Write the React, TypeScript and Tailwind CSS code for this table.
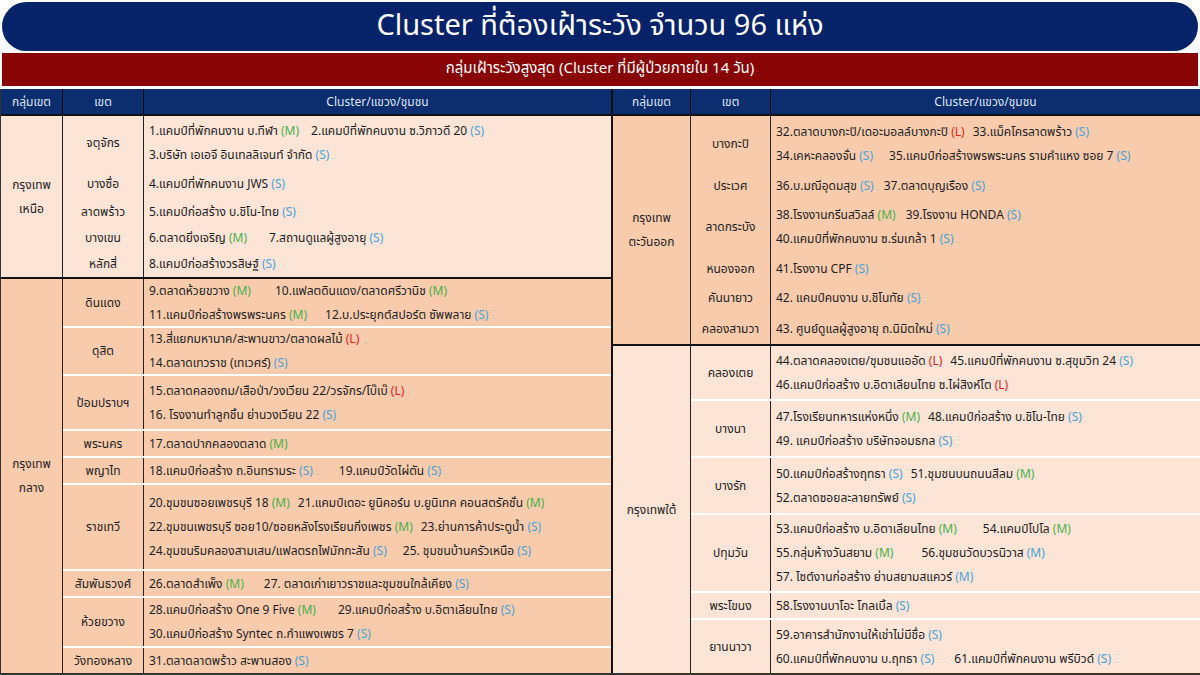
import React from 'react';

type Tag = 'M' | 'S' | 'L' | 'Mb';
type Item = { t: string; tag: Tag };
type Line = { items: Item[]; gap?: string };
type District = { name: string; h: string; lines: Line[] };
type Group = { name: string[]; bg: string; sep: boolean; districts: District[] };

const tagColor: Record<Tag, string> = {
  M: 'text-[#49b04a]',
  Mb: 'text-[#4aa3d8]',
  S: 'text-[#4aa3d8]',
  L: 'text-[#e2231a]',
};

const left: Group[] = [
  {
    name: ['กรุงเทพ', 'เหนือ'],
    bg: 'bg-[#fce4d6]',
    sep: false,
    districts: [
      {
        name: 'จตุจักร',
        h: 'h-[53px]',
        lines: [
          { items: [{ t: '1.แคมป์ที่พักคนงาน บ.ทีฬา', tag: 'M' }, { t: '2.แคมป์ที่พักคนงาน ซ.วิภาวดี 20', tag: 'S' }] },
          { items: [{ t: '3.บริษัท เอเอจี อินเทลลิเจนท์ จำกัด', tag: 'S' }] },
        ],
      },
      { name: 'บางซื่อ', h: 'h-[30px]', lines: [{ items: [{ t: '4.แคมป์ที่พักคนงาน JWS', tag: 'S' }] }] },
      { name: 'ลาดพร้าว', h: 'h-[26px]', lines: [{ items: [{ t: '5.แคมป์ก่อสร้าง บ.ชิโน-ไทย', tag: 'S' }] }] },
      {
        name: 'บางเขน',
        h: 'h-[26px]',
        lines: [{ gap: 'gap-x-[22px]', items: [{ t: '6.ตลาดยิ่งเจริญ', tag: 'M' }, { t: '7.สถานดูแลผู้สูงอายุ', tag: 'S' }] }],
      },
      { name: 'หลักสี่', h: 'h-[26px]', lines: [{ items: [{ t: '8.แคมป์ก่อสร้างวรสิษฐ์', tag: 'S' }] }] },
    ],
  },
  {
    name: ['กรุงเทพ', 'กลาง'],
    bg: 'bg-[#f8cbad]',
    sep: true,
    districts: [
      {
        name: 'ดินแดง',
        h: 'h-[47px]',
        lines: [
          { gap: 'gap-x-[24px]', items: [{ t: '9.ตลาดห้วยขวาง', tag: 'M' }, { t: '10.แฟลตดินแดง/ตลาดศรีวานิช', tag: 'M' }] },
          { gap: 'gap-x-[18px]', items: [{ t: '11.แคมป์ก่อสร้างพรพระนคร', tag: 'M' }, { t: '12.บ.ประยุกต์สปอร์ต ซัพพลาย', tag: 'S' }] },
        ],
      },
      {
        name: 'ดุสิต',
        h: 'h-[48px]',
        lines: [
          { items: [{ t: '13.สี่แยกมหานาค/สะพานขาว/ตลาดผลไม้', tag: 'L' }] },
          { items: [{ t: '14.ตลาดเทวราช (เทเวศร์)', tag: 'S' }] },
        ],
      },
      {
        name: 'ป้อมปราบฯ',
        h: 'h-[55px]',
        lines: [
          { items: [{ t: '15.ตลาดคลองถม/เสือป่า/วงเวียน 22/วรจักร/โบ๊เบ๊', tag: 'L' }] },
          { items: [{ t: '16. โรงงานทำลูกชิ้น ย่านวงเวียน 22 ', tag: 'S' }] },
        ],
      },
      { name: 'พระนคร', h: 'h-[27px]', lines: [{ items: [{ t: '17.ตลาดปากคลองตลาด', tag: 'M' }] }] },
      {
        name: 'พญาไท',
        h: 'h-[27px]',
        lines: [{ gap: 'gap-x-[26px]', items: [{ t: '18.แคมป์ก่อสร้าง ถ.อินทรามระ', tag: 'S' }, { t: '19.แคมป์วัดไผ่ตัน', tag: 'S' }] }],
      },
      {
        name: 'ราชเทวี',
        h: 'h-[86px]',
        lines: [
          { gap: 'gap-x-[8px]', items: [{ t: '20.ชุมชนซอยเพชรบุรี 18', tag: 'M' }, { t: '21.แคมป์เดอะ ยูนิคอร์น บ.ยูนิเทค คอนสตรัคชั่น', tag: 'M' }] },
          { gap: 'gap-x-[8px]', items: [{ t: '22.ชุมชนเพชรบุรี ซอย10/ซอยหลังโรงเรียนกิ่งเพชร', tag: 'M' }, { t: '23.ย่านการค้าประตูน้ำ', tag: 'S' }] },
          { gap: 'gap-x-[16px]', items: [{ t: '24.ชุมชนริมคลองสามเสน/แฟลตรถไฟมักกะสัน', tag: 'S' }, { t: '25. ชุมชนบ้านครัวเหนือ', tag: 'S' }] },
        ],
      },
      {
        name: 'สัมพันธวงศ์',
        h: 'h-[27px]',
        lines: [{ gap: 'gap-x-[20px]', items: [{ t: '26.ตลาดสำเพ็ง', tag: 'M' }, { t: '27. ตลาดเก่าเยาวราชและชุมชนใกล้เคียง', tag: 'S' }] }],
      },
      {
        name: 'ห้วยขวาง',
        h: 'h-[50px]',
        lines: [
          { gap: 'gap-x-[22px]', items: [{ t: '28.แคมป์ก่อสร้าง One 9 Five', tag: 'M' }, { t: '29.แคมป์ก่อสร้าง บ.อิตาเลียนไทย', tag: 'S' }] },
          { items: [{ t: '30.แคมป์ก่อสร้าง Syntec  ถ.กำแพงเพชร 7', tag: 'S' }] },
        ],
      },
      { name: 'วังทองหลาง', h: 'h-[27px]', lines: [{ items: [{ t: '31.ตลาดลาดพร้าว สะพานสอง ', tag: 'S' }] }] },
    ],
  },
];

const right: Group[] = [
  {
    name: ['กรุงเทพ', 'ตะวันออก'],
    bg: 'bg-[#f8cbad]',
    sep: false,
    districts: [
      {
        name: 'บางกะปิ',
        h: 'h-[55px]',
        lines: [
          { gap: 'gap-x-[8px]', items: [{ t: '32.ตลาดบางกะปิ/เดอะมอลล์บางกะปิ', tag: 'L' }, { t: '33.แม็คโครลาดพร้าว', tag: 'S' }] },
          { gap: 'gap-x-[16px]', items: [{ t: '34.เคหะคลองจั่น', tag: 'S' }, { t: '35.แคมป์ก่อสร้างพรพระนคร รามคำแหง ซอย 7', tag: 'S' }] },
        ],
      },
      {
        name: 'ประเวศ',
        h: 'h-[29px]',
        lines: [{ gap: 'gap-x-[10px]', items: [{ t: '36.บ.มณีอุดมสุข', tag: 'S' }, { t: '37.ตลาดบุญเรือง', tag: 'S' }] }],
      },
      {
        name: 'ลาดกระบัง',
        h: 'h-[54px]',
        lines: [
          { gap: 'gap-x-[10px]', items: [{ t: '38.โรงงานกรีนสวิลล์', tag: 'M' }, { t: '39.โรงงาน HONDA', tag: 'S' }] },
          { items: [{ t: '40.แคมป์ที่พักคนงาน ซ.ร่มเกล้า 1', tag: 'S' }] },
        ],
      },
      { name: 'หนองจอก', h: 'h-[29px]', lines: [{ items: [{ t: '41.โรงงาน CPF', tag: 'S' }] }] },
      { name: 'คันนายาว', h: 'h-[30px]', lines: [{ items: [{ t: '42. แคมป์คนงาน บ.ชิโนทัย ', tag: 'S' }] }] },
      { name: 'คลองสามวา', h: 'h-[31px]', lines: [{ items: [{ t: '43. ศูนย์ดูแลผู้สูงอายุ ถ.นิมิตใหม่', tag: 'S' }] }] },
    ],
  },
  {
    name: ['กรุงเทพใต้'],
    bg: 'bg-[#fce4d6]',
    sep: true,
    districts: [
      {
        name: 'คลองเตย',
        h: 'h-[53px]',
        lines: [
          { gap: 'gap-x-[8px]', items: [{ t: '44.ตลาดคลองเตย/ชุมชนแออัด', tag: 'L' }, { t: '45.แคมป์ที่พักคนงาน ซ.สุขุมวิท 24', tag: 'S' }] },
          { items: [{ t: '46.แคมป์ก่อสร้าง บ.อิตาเลียนไทย ซ.ไผ่สิงห์โต', tag: 'L' }] },
        ],
      },
      {
        name: 'บางนา',
        h: 'h-[57px]',
        lines: [
          { gap: 'gap-x-[8px]', items: [{ t: '47.โรงเรียนทหารแห่งหนึ่ง', tag: 'M' }, { t: '48.แคมป์ก่อสร้าง บ.ชิโน-ไทย', tag: 'S' }] },
          { items: [{ t: '49. แคมป์ก่อสร้าง บริษัทจอมธกล', tag: 'S' }] },
        ],
      },
      {
        name: 'บางรัก',
        h: 'h-[57px]',
        lines: [
          { gap: 'gap-x-[8px]', items: [{ t: '50.แคมป์ก่อสร้างฤทธา', tag: 'S' }, { t: '51.ชุมชนบนถนนสีลม', tag: 'M' }] },
          { items: [{ t: '52.ตลาดซอยละลายทรัพย์ ', tag: 'S' }] },
        ],
      },
      {
        name: 'ปทุมวัน',
        h: 'h-[78px]',
        lines: [
          { gap: 'gap-x-[26px]', items: [{ t: '53.แคมป์ก่อสร้าง บ.อิตาเลียนไทย', tag: 'M' }, { t: '54.แคมป์โปโล', tag: 'M' }] },
          { gap: 'gap-x-[28px]', items: [{ t: '55.กลุ่มห้างวันสยาม', tag: 'M' }, { t: '56.ชุมชนวัดบวรนิวาส', tag: 'Mb' }] },
          { items: [{ t: '57. ไซต์งานก่อสร้าง ย่านสยามสแควร์', tag: 'Mb' }] },
        ],
      },
      { name: 'พระโขนง', h: 'h-[27px]', lines: [{ items: [{ t: '58.โรงงานบาโอะ โกลเบิ้ล', tag: 'S' }] }] },
      {
        name: 'ยานนาวา',
        h: 'h-[55px]',
        lines: [
          { items: [{ t: '59.อาคารสำนักงานให้เช่าไม่มีชื่อ', tag: 'S' }] },
          { gap: 'gap-x-[20px]', items: [{ t: '60.แคมป์ที่พักคนงาน บ.ฤทธา', tag: 'S' }, { t: '61.แคมป์ที่พักคนงาน พรีบิวด์', tag: 'S' }] },
        ],
      },
    ],
  },
];

const ClusterLine = ({ line }: { line: Line }) => (
  <div className={`flex items-center whitespace-nowrap ${line.gap || 'gap-x-[12px]'}`}>
    {line.items.map((it, i) => (
      <span key={i}>
        {it.t} <span className={tagColor[it.tag]}>({it.tag === 'Mb' ? 'M' : it.tag})</span>
      </span>
    ))}
  </div>
);

const Table = ({ groups, gw, dw }: { groups: Group[]; gw: string; dw: string }) => (
  <div className="flex flex-col">
    <div className="flex h-[27px] bg-[#0c2d6e] text-[12px] text-[#dfe6f5] border-b-2 border-[#111]">
      <div className={`${gw} flex items-center justify-center border-r border-[#0a0a0a]`}>กลุ่มเขต</div>
      <div className={`${dw} flex items-center justify-center border-r border-[#0a0a0a]`}>เขต</div>
      <div className="flex-1 flex items-center justify-center">Cluster/แขวง/ชุมชน</div>
    </div>
    {groups.map((g, gi) => (
      <div key={gi} className={`flex ${g.bg} ${gi > 0 ? 'border-t-2 border-[#111]' : ''}`}>
        <div className={`${gw} flex flex-col items-center justify-center border-r border-[#222] leading-[24px]`}>
          {g.name.map((n) => (
            <div key={n}>{n}</div>
          ))}
        </div>
        <div className="flex-1 flex flex-col">
          {g.districts.map((d, di) => (
            <div
              key={d.name}
              className={`flex ${d.h} ${g.sep && di > 0 ? 'border-t-2 border-white' : ''}`}
            >
              <div className={`${dw} shrink-0 flex items-center justify-center border-r border-[#222]`}>{d.name}</div>
              <div className="flex-1 flex flex-col justify-center pl-[5px] leading-[24px]">
                {d.lines.map((l, li) => (
                  <ClusterLine key={li} line={l} />
                ))}
              </div>
            </div>
          ))}
        </div>
      </div>
    ))}
  </div>
);

export default function App() {
  return (
    <div
      className="w-[1200px] h-[675px] bg-white flex flex-col overflow-hidden text-[12px] text-[#1e1e1e]"
      style={{ fontFamily: "'Noto Sans Thai', Tahoma, 'DejaVu Sans', sans-serif" }}
    >
      <div className="mx-[2px] mt-[2px] h-[50px] rounded-full bg-[#062369] flex items-center justify-center text-white text-[29px]">
        Cluster ที่ต้องเฝ้าระวัง จำนวน 96 แห่ง
      </div>
      <div className="mx-[2px] mt-[2px] h-[33px] bg-[#880404] flex items-center justify-center text-white text-[15px]">
        กลุ่มเฝ้าระวังสูงสุด (Cluster ที่มีผู้ป่วยภายใน 14 วัน)
      </div>
      <div className="mt-[3px] flex border-b-2 border-[#333] border-l border-[#222]">
        <div className="w-[612px] border-r-2 border-[#111]">
          <Table groups={left} gw="w-[62px]" dw="w-[81px]" />
        </div>
        <div className="flex-1">
          <Table groups={right} gw="w-[78px]" dw="w-[80px]" />
        </div>
      </div>
    </div>
  );
}
